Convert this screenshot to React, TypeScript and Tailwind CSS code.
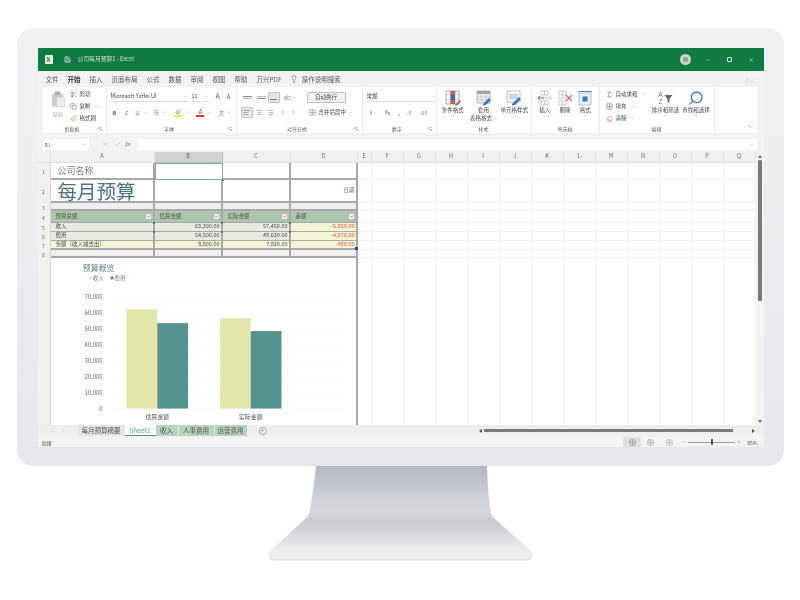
import type { ReactNode } from "react";
import {
  AlignCenter,
  AlignLeft,
  AlignRight,
  Bold,
  ChevronDown,
  ChevronLeft,
  ChevronRight,
  Copy,
  Eraser,
  Grid2x2,
  Italic,
  Minus,
  Paintbrush,
  Plus,
  Save,
  Scissors,
  Search,
  Sigma,
  Underline,
  Lightbulb,
  X,
  Check,
} from "lucide-react";

const menus = ["文件", "开始", "插入", "页面布局", "公式", "数据", "审阅", "视图", "帮助", "万兴PDF"];
const restCols = ["F", "G", "H", "I", "J", "K", "L", "M", "N", "O", "P", "Q"];

const Caret = () => <ChevronDown className="w-[5px] h-[5px] text-[#888] shrink-0" strokeWidth={2} />;

function Launcher() {
  return (
    <svg viewBox="0 0 6 6" className="w-[4px] h-[4px] shrink-0">
      <path d="M0.5 5.5V0.5H5.5M2 2L5.5 5.5M5.5 3V5.5H3" fill="none" stroke="#888" strokeWidth="0.8" />
    </svg>
  );
}

function Group({ w, label, launcher, children }: { w: string; label: string; launcher?: boolean; children: ReactNode }) {
  return (
    <div className={`${w} h-full flex flex-col border-r border-[#e8e8e8]`}>
      <div className="flex-1 min-h-0">{children}</div>
      <div className="h-[9px] flex items-center px-1">
        <div className="flex-1 text-center text-[5px] leading-none text-[#555]">{label}</div>
        {launcher && <Launcher />}
      </div>
    </div>
  );
}

function PasteIcon() {
  return (
    <svg viewBox="0 0 16 18" className="w-[15px] h-[18px]">
      <rect x="1" y="3" width="12" height="14" rx="1" fill="#cfcfcf" />
      <rect x="4" y="1" width="6" height="4" rx="1" fill="#a9a9a9" />
      <rect x="6" y="7" width="9" height="10" fill="#ececec" stroke="#c4c4c4" strokeWidth="0.6" />
    </svg>
  );
}

function CondIcon() {
  return (
    <svg viewBox="0 0 16 16" className="w-[16px] h-[16px]">
      <rect x="1" y="1" width="13" height="13" fill="#fff" stroke="#888" strokeWidth="0.7" />
      <path d="M1 5H14M1 9.500H14M5.500 1V14M10 1V14" stroke="#aaa" strokeWidth="0.5" />
      <rect x="5.500" y="1" width="4.500" height="4.500" fill="#d9534f" />
      <rect x="5.500" y="5" width="4.500" height="5" fill="#2f6fb5" />
      <rect x="5.500" y="10" width="4.500" height="4" fill="#d9534f" />
      <path d="M10 15L15 10L16 11L11 16Z" fill="#666" />
    </svg>
  );
}

function TableIcon() {
  return (
    <svg viewBox="0 0 16 16" className="w-[16px] h-[16px]">
      <rect x="1" y="1" width="13" height="12" fill="#eef1f5" stroke="#8a8a8a" strokeWidth="0.6" />
      <rect x="1" y="1" width="13" height="3" fill="#9aa5b1" />
      <path d="M1 7H14M1 10H14M5.500 4V13M10 4V13" stroke="#a6b0bb" strokeWidth="0.5" />
      <path d="M7 14L13 8L15 10L10 15L7 15.500Z" fill="#3a78c2" />
    </svg>
  );
}

function StyleIcon() {
  return (
    <svg viewBox="0 0 16 16" className="w-[16px] h-[16px]">
      <rect x="1" y="1" width="13" height="11" fill="#fff" stroke="#8a8a8a" strokeWidth="0.6" />
      <rect x="3" y="3.500" width="9" height="6" fill="#c9d6e6" />
      <path d="M6 14L13 7L15 9L9 15L6 15.500Z" fill="#3a78c2" />
    </svg>
  );
}

function InsertIcon() {
  return (
    <svg viewBox="0 0 16 16" className="w-[16px] h-[16px]">
      <path d="M4 1H11V5H4ZM4 11H11V15H4ZM7.500 1V5M7.500 11V15" fill="#fff" stroke="#8fa7bf" strokeWidth="0.6" />
      <rect x="6" y="6.500" width="9" height="3" fill="#dce4ed" />
      <path d="M7 8H1M3 6L1 8L3 10" fill="none" stroke="#3a78c2" strokeWidth="1" />
    </svg>
  );
}

function DeleteIcon() {
  return (
    <svg viewBox="0 0 16 16" className="w-[16px] h-[16px]">
      <path d="M2 1H9V5H2ZM2 11H9V15H2ZM5.500 1V5M5.500 11V15" fill="#fff" stroke="#a9a9a9" strokeWidth="0.6" />
      <rect x="1" y="6.500" width="9" height="3" fill="#dce4ed" />
      <path d="M9 5L15 11M15 5L9 11" stroke="#e0614f" strokeWidth="1.1" />
    </svg>
  );
}

function FormatIcon() {
  return (
    <svg viewBox="0 0 16 16" className="w-[16px] h-[16px]">
      <rect x="2" y="3" width="12" height="12" fill="#eef1f5" stroke="#8a97a5" strokeWidth="0.6" />
      <rect x="5.500" y="6.500" width="5" height="5" fill="#3a78c2" />
      <path d="M1 1.500H15" stroke="#3a78c2" strokeWidth="0.9" />
    </svg>
  );
}

function SortIcon() {
  return (
    <div className="flex items-center h-[16px]">
      <div className="flex flex-col items-center text-[6.5px] leading-[7px] font-['Liberation_Sans',sans-serif]">
        <span className="text-[#3a78c2]">A</span>
        <span className="text-[#7b5ea8]">Z</span>
      </div>
      <svg viewBox="0 0 10 10" className="w-[9px] h-[9px] ml-[1px]">
        <path d="M0.500 1H9.500L6 5.500V9.500H4V5.500Z" fill="#666" />
      </svg>
    </div>
  );
}

function BigButton({ icon, label, sub }: { icon: ReactNode; label: string; sub?: string }) {
  return (
    <div className="flex-1 flex flex-col items-center pt-[3px] text-[5.5px] leading-[6px] text-[#444]">
      {icon}
      <div className="mt-[1px] whitespace-nowrap">{label}</div>
      {sub && <div className="mt-[2px] whitespace-nowrap flex items-center">{sub}<Caret /></div>}
      {!sub && <Caret />}
    </div>
  );
}

function Ribbon() {
  return (
    <div className="ml-[5px] mr-[7px] h-[46px] bg-white rounded-[2px] flex text-[#444]">
      <Group w="w-[64px]" label="剪贴板" launcher>
        <div className="flex pl-[8px] pt-[3px] gap-[4px]">
          <div className="flex flex-col items-center text-[5px] leading-[7px] text-[#aaa]">
            <PasteIcon />
            <span className="mt-[2px]">粘贴</span>
          </div>
          <div className="flex flex-col gap-[4px] text-[5.5px] leading-[8px] whitespace-nowrap">
            <div className="flex items-center gap-[3px]"><Scissors className="w-[7px] h-[7px] text-[#4a6f9c]" />剪切</div>
            <div className="flex items-center gap-[3px]"><Copy className="w-[7px] h-[7px] text-[#4a86c5]" />复制<Caret /></div>
            <div className="flex items-center gap-[3px]"><Paintbrush className="w-[7px] h-[7px] text-[#d9a441]" />格式刷</div>
          </div>
        </div>
      </Group>

      <Group w="w-[130px]" label="字体" launcher>
        <div className="px-[3px] pt-[4px]">
          <div className="flex items-center gap-[2px] h-[11px]">
            <div className="w-[79px] h-[10px] border-b border-[#ddd] flex items-center justify-between text-[5.5px] pl-[1px] pr-[1px]">Microsoft YaHei UI<Caret /></div>
            <div className="w-[18px] h-[10px] border-b border-[#ddd] flex items-center justify-between text-[5.5px] pl-[1px]">11<Caret /></div>
            <span className="text-[7px] ml-[5px] text-[#555]">A</span>
            <span className="text-[6px] ml-[5px] text-[#555]">A</span>
          </div>
          <div className="flex items-center gap-[3px] h-[11px] mt-[5px] pl-[2px]">
            <Bold className="w-[6px] h-[6px]" strokeWidth={3} />
            <Italic className="w-[6px] h-[6px] ml-[4px]" />
            <Underline className="w-[6px] h-[6px] ml-[3px]" />
            <Caret />
            <Grid2x2 className="w-[7px] h-[7px] text-[#999] ml-[3px]" />
            <Caret />
            <div className="ml-[4px] w-[8px] flex flex-col items-center">
              <Paintbrush className="w-[6px] h-[6px] text-[#777]" />
              <div className="w-[8px] h-[2px] bg-[#f7e93c]" />
            </div>
            <Caret />
            <div className="ml-[3px] w-[8px] flex flex-col items-center text-[6px] leading-[6px] text-[#555]">
              A
              <div className="w-[8px] h-[2px] bg-[#d8342a]" />
            </div>
            <Caret />
            <span className="ml-[3px] text-[6px] text-[#6d93b5]">文</span>
            <Caret />
          </div>
        </div>
      </Group>

      <Group w="w-[126px]" label="对齐方式" launcher>
        <div className="px-[3px] pt-[4px]">
          <div className="flex items-center h-[12px]">
            <div className="w-[9px] flex flex-col gap-[1px] ml-[3px]"><div className="h-px bg-[#888]" /><div className="h-px bg-[#bbb]" /></div>
            <div className="w-[9px] flex flex-col gap-[1px] ml-[5px]"><div className="h-px bg-[#bbb]" /><div className="h-px bg-[#888]" /></div>
            <div className="w-[12px] h-[11px] ml-[2px] bg-[#e6e6e6] border border-[#c4c4c4] rounded-[1px] flex items-end justify-center pb-[2px]"><div className="w-[7px] h-px bg-[#777]" /></div>
            <span className="ml-[4px] text-[6px] text-[#888]">ab</span>
            <Caret />
            <div className="ml-[11px] h-[11px] w-[39px] border border-[#bdbdbd] bg-[#f3f3f3] rounded-[1px] flex items-center justify-center text-[5.5px] whitespace-nowrap">自动换行</div>
          </div>
          <div className="flex items-center h-[12px] mt-[3px]">
            <div className="w-[12px] h-[11px] ml-[1px] bg-[#e6e6e6] border border-[#c4c4c4] rounded-[1px] flex items-center justify-center"><AlignLeft className="w-[7px] h-[7px] text-[#777]" /></div>
            <AlignCenter className="w-[7px] h-[7px] ml-[3px] text-[#888]" />
            <AlignRight className="w-[7px] h-[7px] ml-[4px] text-[#888]" />
            <ChevronLeft className="w-[7px] h-[7px] ml-[5px] text-[#4a86c5]" />
            <ChevronRight className="w-[7px] h-[7px] ml-[4px] text-[#4a86c5]" />
            <Grid2x2 className="w-[7px] h-[7px] ml-[12px] text-[#6d93b5]" />
            <span className="ml-[3px] text-[5.5px] whitespace-nowrap">合并后居中</span>
            <span className="ml-[2px]"><Caret /></span>
          </div>
        </div>
      </Group>

      <Group w="w-[74px]" label="数字" launcher>
        <div className="px-[4px] pt-[4px]">
          <div className="h-[11px] w-[69px] border-b border-[#ddd] flex items-center justify-between text-[5.5px]">常规<Caret /></div>
          <div className="flex items-center h-[11px] mt-[5px] text-[6px] text-[#666]">
            <span className="ml-[3px] text-[#4a86c5]">¥</span>
            <Caret />
            <span className="ml-[7px]">%</span>
            <span className="ml-[8px]">,</span>
            <span className="ml-[7px] text-[5px] text-[#4a86c5]">.0</span>
            <span className="ml-[9px] text-[5px] text-[#4a86c5]">.00</span>
          </div>
        </div>
      </Group>

      <Group w="w-[95px]" label="样式">
        <div className="flex px-[1px]">
          <BigButton icon={<CondIcon />} label="条件格式" />
          <BigButton icon={<TableIcon />} label="套用" sub="表格格式" />
          <BigButton icon={<StyleIcon />} label="单元格样式" />
        </div>
      </Group>

      <Group w="w-[68px]" label="单元格">
        <div className="flex px-[3px]">
          <BigButton icon={<InsertIcon />} label="插入" />
          <BigButton icon={<DeleteIcon />} label="删除" />
          <BigButton icon={<FormatIcon />} label="格式" />
        </div>
      </Group>

      <Group w="w-[115px]" label="编辑">
        <div className="flex">
          <div className="pl-[6px] pt-[3px] flex flex-col gap-[4px] text-[5.5px] leading-[8px] whitespace-nowrap w-[50px]">
            <div className="flex items-center gap-[3px]"><Sigma className="w-[7px] h-[7px] text-[#666]" />自动求和<Caret /></div>
            <div className="flex items-center gap-[3px]"><Grid2x2 className="w-[7px] h-[7px] text-[#4a86c5]" />填充<Caret /></div>
            <div className="flex items-center gap-[3px]"><Eraser className="w-[7px] h-[7px] text-[#d9606e]" />清除<Caret /></div>
          </div>
          <div className="w-[32px]">
            <BigButton icon={<SortIcon />} label="排序和筛选" />
          </div>
          <div className="w-[29px]">
            <BigButton icon={<Search className="w-[16px] h-[16px] text-[#3a78c2] -scale-x-100" />} label="查找和选择" />
          </div>
        </div>
      </Group>

      <div className="flex-1 flex items-end justify-end pr-[2px] pb-[2px]">
        <ChevronDown className="w-[9px] h-[9px] text-[#aaa]" />
      </div>
    </div>
  );
}

function Cell({ thin, className = "", children }: { thin?: boolean; className?: string; children?: ReactNode }) {
  const edge = thin ? "border-r-2 border-b border-[#a8a8a8]" : "border-r-2 border-b-2 border-[#a8a8a8]";
  return (
    <div className={`relative min-w-0 flex items-center whitespace-nowrap overflow-visible text-[5.5px] leading-none text-[#4a4a4a] pl-[5px] pr-[1px] ${edge} ${className}`}>
      {children}
    </div>
  );
}

// green error triangle in the cell corner
const Flag = () => <span className="absolute -left-[2px] -top-px w-[2px] h-[2px] bg-[#2f8f5b]" />;

function HeadCell({ label }: { label: string }) {
  return (
    <Cell thin className="bg-[#abc6ab] justify-between">
      <span>{label}</span>
      <span className="w-[7px] h-[7px] bg-[#f0f0f0] border border-[#bbb] flex items-center justify-center">
        <ChevronDown className="w-[5px] h-[5px] text-[#777]" strokeWidth={3} />
      </span>
    </Cell>
  );
}

function RowNo({ n }: { n?: number }) {
  return <div className="bg-[#f0f0f0] border-r border-[#d8d8d8] flex items-center justify-center text-[5px] leading-none text-[#666]">{n}</div>;
}

function BlankCells({ last }: { last?: boolean }) {
  const cls = last ? "border-r border-[#f3f3f3]" : "border-r border-b border-[#f1f1f1]";
  return (
    <>
      <div className={cls} />
      {restCols.map((c) => (
        <div key={c} className={cls} />
      ))}
    </>
  );
}

function BudgetChart() {
  const axis = ["70,000", "60,000", "50,000", "40,000", "30,000", "20,000", "10,000", "0"];
  return (
    <svg viewBox="0 0 307 167" className="w-[305px] h-[167px] block" fontFamily="'Noto Sans CJK SC', sans-serif">
      <text x="32" y="13" fontSize="8" fill="#6b8287">预算概览</text>
      <rect x="38" y="18" width="3" height="3" fill="#e2e6a8" />
      <text x="42" y="21.500" fontSize="5.500" fill="#6b8287">收入</text>
      <rect x="60" y="18" width="3" height="3" fill="#55938f" />
      <text x="64" y="21.500" fontSize="5.500" fill="#6b8287">费用</text>
      {axis.map((t, i) => (
        <g key={t}>
          <line x1="60" x2="297" y1={39 + i * 16} y2={39 + i * 16} stroke="#f5f5f5" strokeWidth="0.6" />
          <text x="52" y={41 + i * 16} fontSize="6" textAnchor="end" fill="#666">{t}</text>
        </g>
      ))}
      <rect x="76" y="51" width="31" height="100" fill="#e2e6a8" />
      <rect x="107" y="65" width="31" height="86" fill="#55938f" />
      <rect x="170" y="60" width="31" height="91" fill="#e2e6a8" />
      <rect x="201" y="73" width="31" height="78" fill="#55938f" />
      <text x="107" y="162" fontSize="6" textAnchor="middle" fill="#555">估算金额</text>
      <text x="201" y="162" fontSize="6" textAnchor="middle" fill="#555">实际金额</text>
    </svg>
  );
}

function Sheet() {
  const colHead = "bg-[#f0f0f0] border-r border-b border-[#e0e0e0] flex items-center justify-center text-[5.5px] leading-none text-[#666]";
  return (
    <div className="mt-[2px] h-[273px] flex bg-white">
      <div className="w-[718px] grid grid-cols-[13px_104px_68px_68px_67px_14px_repeat(11,32px)_1fr] grid-rows-[11px_17px_23px_8px_12px_9px_9px_9px_8px_1fr]">
        <div className="bg-[#f0f0f0] border-r border-b border-[#e0e0e0]" />
        <div className={colHead}>A</div>
        <div className="bg-[#d2d2d2] border-r border-b border-[#bbb] flex items-center justify-center text-[5.5px] leading-none text-[#666]">B</div>
        <div className={colHead}>C</div>
        <div className={colHead}>D</div>
        <div className={colHead}>E</div>
        {restCols.map((c) => (
          <div key={c} className={colHead}>{c}</div>
        ))}

        <RowNo n={1} />
        <Cell className="text-[9px] text-[#6b8287] pl-[7px]">公司名称</Cell>
        <div className="relative border-[1.5px] border-[#7fae95]"><span className="absolute -right-[2px] -bottom-[2px] w-[2px] h-[2px] bg-[#2f8f5b]" /></div>
        <Cell />
        <Cell />
        <BlankCells />

        <RowNo n={2} />
        <Cell className="text-[19.5px] text-[#47737c] pl-[7px]">每月预算</Cell>
        <Cell />
        <Cell />
        <Cell className="justify-end text-[#5b7a80]">日期</Cell>
        <BlankCells />

        <RowNo n={3} />
        <Cell className="bg-[#efefef]" />
        <Cell className="bg-[#efefef]" />
        <Cell className="bg-[#efefef]" />
        <Cell className="bg-[#efefef]" />
        <BlankCells />

        <RowNo n={4} />
        <HeadCell label="预算总额" />
        <HeadCell label="估算金额" />
        <HeadCell label="实际金额" />
        <HeadCell label="差额" />
        <BlankCells />

        <RowNo n={5} />
        <Cell thin className="bg-[#e9e9e2]">收入</Cell>
        <Cell thin className="bg-[#e9e9e2] justify-end"><Flag />63,300.00</Cell>
        <Cell thin className="bg-[#e9e9e2] justify-end"><Flag />57,450.00</Cell>
        <Cell thin className="bg-[#f3f5d6] justify-end text-[#e2543c]"><Flag />-5,850.00</Cell>
        <BlankCells />

        <RowNo n={6} />
        <Cell thin className="bg-[#e9e9e2]">费用</Cell>
        <Cell thin className="bg-[#e9e9e2] justify-end"><Flag />54,500.00</Cell>
        <Cell thin className="bg-[#e9e9e2] justify-end"><Flag />49,630.00</Cell>
        <Cell thin className="bg-[#f3f5d6] justify-end text-[#e2543c]"><Flag />-4,870.00</Cell>
        <BlankCells />

        <RowNo n={7} />
        <Cell className="bg-[#f3f5d6]">余额（收入减支出）</Cell>
        <Cell className="bg-[#f3f5d6] justify-end">8,800.00</Cell>
        <Cell className="bg-[#f3f5d6] justify-end">7,820.00</Cell>
        <Cell className="bg-[#f3f5d6] justify-end text-[#e2543c]">
          -980.00
          <span className="absolute -right-[2px] -bottom-[2px] w-[3px] h-[3px] bg-[#3b3fa0]" />
        </Cell>
        <BlankCells />

        <RowNo n={8} />
        <Cell className="bg-[#efefef]" />
        <Cell className="bg-[#efefef]" />
        <Cell className="bg-[#efefef]" />
        <Cell className="bg-[#efefef]" />
        <BlankCells />

        <RowNo />
        <div className="col-span-4 border-r-2 border-[#a8a8a8] overflow-hidden">
          <BudgetChart />
        </div>
        <BlankCells last />
      </div>

      {/* vertical scrollbar */}
      <div className="flex-1 bg-[#f3f3f3] flex flex-col items-center pt-[3px] pb-[2px]">
        <div className="w-0 h-0 border-x-[2px] border-x-transparent border-b-[3px] border-b-[#666]" />
        <div className="mt-[2px] w-[4px] h-[141px] rounded-[1px] bg-[#7a7a7a]" />
        <div className="flex-1" />
        <div className="w-0 h-0 border-x-[2px] border-x-transparent border-t-[3px] border-t-[#666]" />
      </div>
    </div>
  );
}

function SheetTabs() {
  return (
    <div className="h-[11px] bg-[#eeeeee] flex items-stretch text-[6.5px] leading-none text-[#555]">
      <div className="w-[40px] flex items-center justify-center gap-[5px] text-[#bbb]">
        <ChevronLeft className="w-[5px] h-[5px]" />
        <ChevronRight className="w-[5px] h-[5px]" />
      </div>
      <div className="w-[47px] bg-[#e4e4e4] flex items-center justify-center whitespace-nowrap">每月预算摘要</div>
      <div className="w-[31px] bg-white border-b border-[#4b9a76] flex items-center justify-center text-[#5aa27f]">Sheet1</div>
      <div className="w-[22px] bg-[#b9d3bc] flex items-center justify-center">收入</div>
      <div className="w-[36px] bg-[#b9d3bc] flex items-center justify-center border-l border-[#e4e4e4]">人事费用</div>
      <div className="w-[33px] bg-[#b9d3bc] flex items-center justify-center border-l border-[#e4e4e4]">运营费用</div>
      <div className="ml-[12px] w-[8px] h-[8px] self-center rounded-full border border-[#aaa] flex items-center justify-center">
        <Plus className="w-[5px] h-[5px] text-[#888]" />
      </div>
      <div className="ml-[212px] flex-1 flex items-center gap-[2px] pr-[9px]">
        <div className="w-0 h-0 border-y-[2px] border-y-transparent border-r-[3px] border-r-[#555]" />
        <div className="w-[249px] h-[3px] bg-[#7a7a7a]" />
        <div className="flex-1" />
        <div className="w-0 h-0 border-y-[2px] border-y-transparent border-l-[3px] border-l-[#555]" />
      </div>
    </div>
  );
}

function StatusBar() {
  return (
    <div className="mt-px h-[10px] bg-[#f3f3f3] flex items-center text-[5px] leading-none text-[#555] pl-[4px]">
      <span>就绪</span>
      <div className="flex-1" />
      <div className="w-[18px] h-[10px] bg-[#e0e0e0] flex items-center justify-center">
        <Grid2x2 className="w-[7px] h-[7px] text-[#888]" />
      </div>
      <Grid2x2 className="w-[7px] h-[7px] text-[#999] ml-[6px]" />
      <Grid2x2 className="w-[7px] h-[7px] text-[#aaa] ml-[12px]" />
      <Minus className="w-[4px] h-[4px] ml-[9px] text-[#777]" />
      <div className="ml-[2px] w-[47px] h-px bg-[#999] flex items-center justify-center">
        <div className="w-[2px] h-[6px] bg-[#555]" />
      </div>
      <Plus className="w-[4px] h-[4px] ml-[2px] text-[#777]" />
      <span className="ml-[6px] mr-[6px]">85%</span>
    </div>
  );
}

export default function App() {
  return (
    <div className="w-[800px] h-[600px] bg-white flex flex-col items-center pt-[28px] font-['Noto_Sans_CJK_SC','Liberation_Sans',sans-serif]">
      {/* monitor */}
      <div className="w-[767px] h-[438px] rounded-[16px] bg-linear-to-b from-[#f0f1f3] to-[#e6e7ea] pt-[20px] pl-[21px] shrink-0">
        <div className="w-[726px] h-[399px] bg-[#f2f2f2] flex flex-col overflow-hidden blur-[0.45px]">
          <div className="h-[23px] bg-[#117a43] flex items-center pl-[7px] pr-[10px] text-white">
            <div className="w-[8px] h-[9px] bg-[#e8f1ec] rounded-[1px] flex items-center justify-center text-[6px] leading-none font-bold text-[#117a43]">X</div>
            <Save className="w-[7px] h-[7px] ml-[11px]" />
            <span className="ml-[7px] text-[5.8px] text-[#cfe5d8] whitespace-nowrap">公司每月预算1 - Excel</span>
            <div className="flex-1" />
            <div className="w-[11px] h-[11px] rounded-full bg-[#c9d6ce] flex items-center justify-center">
              <div className="w-[5px] h-[5px] rounded-full bg-[#8f9a94]" />
            </div>
            <Minus className="w-[6px] h-[6px] ml-[14px] text-[#cfe5d8]" />
            <div className="w-[5px] h-[5px] ml-[16px] border border-[#e4f0e9] rounded-[1px]" />
            <X className="w-[6px] h-[6px] ml-[16px] text-[#cfe5d8]" />
          </div>

          <div className="h-[16px] flex items-center pl-[8px] pr-[9px] text-[6.5px] leading-none text-[#555] whitespace-nowrap">
            <div className="flex items-center gap-[9px]">
              {menus.map((m) => (
                <span key={m} className={m === "开始" ? "font-bold text-[#333]" : ""}>{m}</span>
              ))}
            </div>
            <Lightbulb className="w-[8px] h-[8px] ml-[8px] text-[#777]" />
            <span className="ml-[4px]">操作说明搜索</span>
            <div className="flex-1" />
            <span className="text-[5px] text-[#dcdcdc]">共享</span>
          </div>

          <Ribbon />

          <div className="mt-[6px] ml-[5px] mr-[7px] h-[11px] flex items-center text-[5px] text-[#666]">
            <div className="w-[46px] h-full bg-white flex items-center justify-between px-[2px]">B1<ChevronDown className="w-[5px] h-[5px] text-[#888]" /></div>
            <div className="w-[48px] flex items-center pl-[13px] gap-[5px] text-[#bbb]">
              <X className="w-[7px] h-[7px]" />
              <Check className="w-[7px] h-[7px]" />
              <span className="text-[7px] italic text-[#666] font-['Liberation_Serif',serif]">fx</span>
            </div>
            <div className="flex-1 h-full bg-white flex items-center justify-end pr-[2px]">
              <ChevronDown className="w-[6px] h-[6px] text-[#aaa]" />
            </div>
          </div>

          <Sheet />
          <SheetTabs />
          <StatusBar />
        </div>
      </div>

      {/* stand */}
      <svg viewBox="0 0 270 96" className="w-[270px] h-[96px] shrink-0 blur-[0.3px]">
        <defs>
          <linearGradient id="neck" x1="0" y1="0" x2="0" y2="1">
            <stop offset="0" stopColor="#b4b9c1" />
            <stop offset="0.35" stopColor="#cfd2d7" />
            <stop offset="0.5" stopColor="#d4d6da" />
            <stop offset="0.58" stopColor="#c6c9ce" />
            <stop offset="0.88" stopColor="#e9eaec" />
            <stop offset="1" stopColor="#eeeeef" />
          </linearGradient>
        </defs>
        <path
          d="M51 0H222C222.500 18 224 34 226 47C226.500 49 228 51 230 53L266 85C270 89 267 94 262 94H9C4 94 1 89 5 85L40 53C42 51 43.500 49 44 47C47 34 49 18 51 0Z"
          fill="url(#neck)"
        />
        <path d="M5 92.500C6 93.500 7.500 94 9 94H262C263.500 94 265 93.500 266 92.500" fill="none" stroke="#d9dadd" strokeWidth="1" />
      </svg>
    </div>
  );
}
